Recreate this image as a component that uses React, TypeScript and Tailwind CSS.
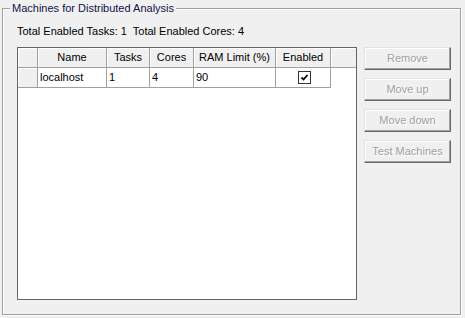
import React from "react";

const cols = [
  { name: "Name", w: 69, val: "localhost" },
  { name: "Tasks", w: 43, val: "1" },
  { name: "Cores", w: 44, val: "4" },
  { name: "RAM Limit (%)", w: 82, val: "90" },
  { name: "Enabled", w: 55, val: "" },
];

function HeaderCell({ w, children }: { w: number; children?: React.ReactNode }) {
  return (
    <div
      className="h-[20px] shrink-0 flex items-center justify-center bg-[#f0f0f0] border-r border-b border-[#a0a0a0] shadow-[inset_1px_1px_0_#ffffff] text-black"
      style={{ width: w }}
    >
      {children}
    </div>
  );
}

function Btn({ label }: { label: string }) {
  return (
    <div className="h-[23px] w-[87px] flex items-center justify-center bg-[#f0f0f0] border border-t-[#e3e3e3] border-l-[#e3e3e3] border-r-[#696969] border-b-[#696969] shadow-[inset_-1px_-1px_0_#a0a0a0,inset_1px_1px_0_#ffffff] text-[#a0a0a0] [text-shadow:1px_1px_0_#ffffff]">
      {label}
    </div>
  );
}

export default function App() {
  return (
    <div
      className="w-[465px] h-[318px] bg-[#f0f0f0] pt-[8px] pl-[2px] text-[11px] leading-[13px]"
      style={{ fontFamily: '"Liberation Sans", Arial, sans-serif' }}
    >
      <div className="relative w-[459px] h-[307px] border border-[#a0a0a0] shadow-[inset_1px_1px_0_#ffffff,1px_1px_0_#ffffff] pt-[16px] pl-[14px] pr-[8px] flex flex-col">
        <span className="absolute top-[-7px] left-[7px] px-[2px] bg-[#f0f0f0] text-[#10104a]">
          Machines for Distributed Analysis
        </span>
        <div className="text-black whitespace-pre">Total Enabled Tasks: 1  Total Enabled Cores: 4</div>
        <div className="flex mt-[9px] gap-[7px]">
          <div className="w-[340px] h-[253px] border border-[#646464] bg-white flex flex-col">
            <div className="flex">
              <HeaderCell w={20} />
              {cols.map((c) => (
                <HeaderCell key={c.name} w={c.w}>
                  {c.name}
                </HeaderCell>
              ))}
              <div className="h-[20px] flex-1 bg-[#f0f0f0] border-b border-[#a0a0a0] shadow-[inset_1px_1px_0_#ffffff]" />
            </div>
            <div className="flex">
              <div className="w-[20px] h-[20px] bg-[#f0f0f0] border-r border-b border-[#a0a0a0] shadow-[inset_1px_1px_0_#ffffff]" />
              {cols.map((c) => (
                <div
                  key={c.name}
                  className="h-[20px] shrink-0 flex items-center pl-[2px] border-r border-b border-[#a0a0a0] text-black"
                  style={{ width: c.w }}
                >
                  {c.name === "Enabled" ? (
                    <div className="mx-auto w-[13px] h-[13px] border border-[#333333] bg-white flex items-center justify-center">
                      <svg width="9" height="9" viewBox="0 0 9 9">
                        <path d="M1.5 4.5 L3.5 6.5 L7.5 2" stroke="#000" strokeWidth="1.8" fill="none" />
                      </svg>
                    </div>
                  ) : (
                    c.val
                  )}
                </div>
              ))}
            </div>
          </div>
          <div className="flex flex-col gap-[8px]">
            <Btn label="Remove" />
            <Btn label="Move up" />
            <Btn label="Move down" />
            <Btn label="Test Machines" />
          </div>
        </div>
      </div>
    </div>
  );
}
